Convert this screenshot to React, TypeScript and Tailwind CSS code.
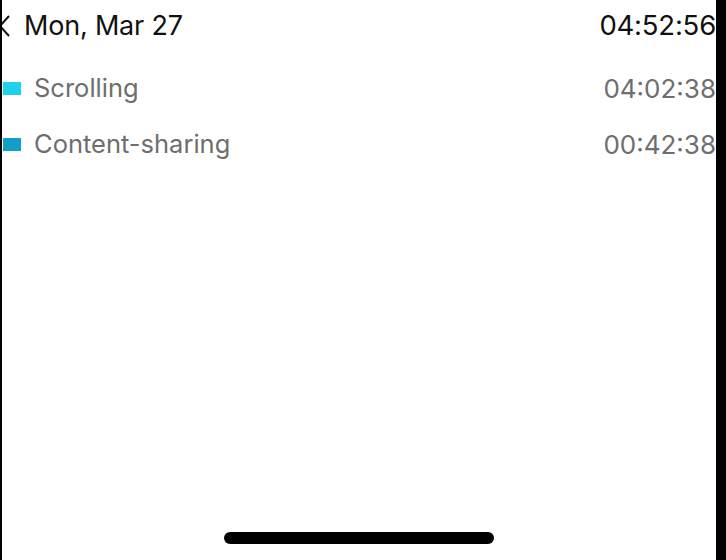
import React from 'react';

const rows = [
  { label: 'Scrolling', time: '04:02:38', color: 'bg-[#1fd2ec]' },
  { label: 'Content-sharing', time: '00:42:38', color: 'bg-[#119fc6]' },
];

const App = () => (
  <div className="w-[726px] h-[560px] bg-white flex border-l-2 border-r-[10px] border-black overflow-hidden font-['Inter',sans-serif]">
    <div className="flex-1 flex flex-col relative">
      {/* header */}
      <div className="h-[60px] pb-[8px] flex items-center justify-between">
        <div className="flex items-center">
          <svg width="12" height="22" viewBox="0 0 12 22" className="-ml-[4px] mr-[14px]">
            <path d="M11 1 L2 11 L11 21" fill="none" stroke="#111" strokeWidth="2" />
          </svg>
          <span className="text-[27px] text-[#111] tracking-[-0.2px]">Mon, Mar 27</span>
        </div>
        <span className="text-[27.5px] text-[#111] tracking-[-0.2px]">04:52:56</span>
      </div>

      {/* usage rows */}
      <div className="flex flex-col">
        {rows.map((r) => (
          <div key={r.label} className="h-[56px] flex items-center justify-between">
            <div className="flex items-center">
              <div className={`w-[18px] h-[13px] ${r.color} ml-[1px] mr-[13px]`} />
              <span className="text-[25.5px] text-[#6e6e6e]">{r.label}</span>
            </div>
            <span className="text-[26px] text-[#6e6e6e]">{r.time}</span>
          </div>
        ))}
      </div>

      <div className="flex-1" />
      <div className="h-[28px] flex justify-center">
        <div className="w-[270px] h-[12px] rounded-full bg-black" />
      </div>
    </div>
  </div>
);

export default App;
